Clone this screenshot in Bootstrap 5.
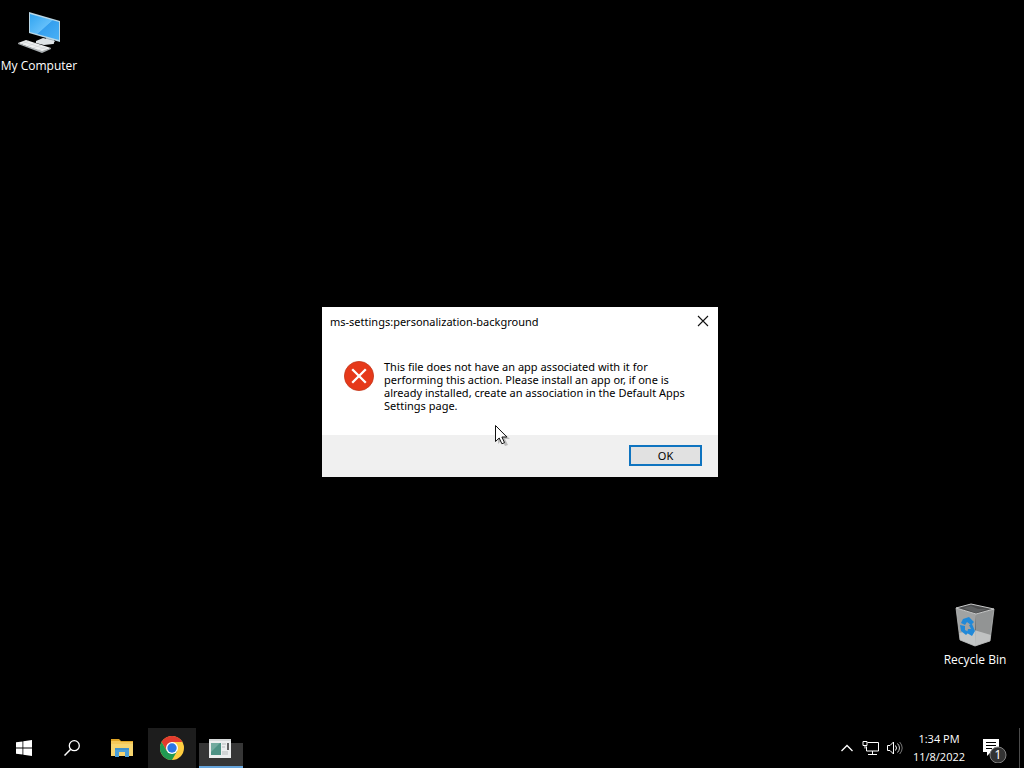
<!DOCTYPE html>
<html lang="en">
<head>
<meta charset="utf-8">
<meta name="viewport" content="width=device-width, initial-scale=1">
<title>Desktop</title>
<link href="https://cdn.jsdelivr.net/npm/bootstrap@5.3.0/dist/css/bootstrap.min.css" rel="stylesheet">
<style>
  body { background: #000; font-family: "Open Sans", "Noto Sans", sans-serif; font-size: 12px; line-height: 16px; }
  svg { display: block; flex: none; }
  .desktop-item { position: absolute; width: 78px; color: #fff; font-size: 12px; }
  .item-computer { left: 0; top: 8px; }
  .item-bin { right: 10px; bottom: 60px; }
  .msg-window { position: absolute; left: 322px; top: 307px; width: 396px; background: #fff; color: #000; font-family: "Noto Sans", sans-serif; font-size: 11px; }
  .msg-title { height: 30px; line-height: 30px; }
  .msg-close { width: 30px; height: 28px; }
  .msg-content { height: 98px; padding: 23px 22px 0; }
  .msg-content svg { margin: 1px 10px 0 0; }
  .msg-text { line-height: 13px; }
  .msg-footer { height: 42px; padding-top: 10px; background: #f0f0f0; }
  .btn-ok { width: 73px; height: 21px; border: 2px solid #0f74c0; background: #e1e1e1; font-size: 11px; line-height: 17px; color: #000; }
  .pointer { position: absolute; left: 494px; top: 424px; }
  .taskbar { height: 40px; color: #fff; }
  .task-btn { width: 48px; height: 40px; }
  .task-files { width: 52px; }
  .task-chrome { background: #1d1d1d; }
  .task-app { width: 44px; height: 40px; margin-left: 3px; padding-right: 2px !important; background: linear-gradient(transparent 15px, #363636 15px, #363636 38px, #66a5dc 38px); }
  .clock { width: 70px; font-size: 11px; line-height: 18px; }
  .show-desktop { width: 5px; height: 40px; margin-left: 11px; border-left: 1px solid #4c4c4c; }
</style>
</head>
<body class="vh-100 d-flex flex-column overflow-hidden">
<main class="flex-grow-1 position-relative">
  <a href="#" class="desktop-item item-computer d-flex flex-column align-items-center text-decoration-none text-nowrap">
    <svg width="48" height="50" viewBox="0 0 48 50" aria-hidden="true">
      <defs><linearGradient id="scr" x1="0" y1="0" x2="1" y2="1"><stop offset="0" stop-color="#30a4f0"/><stop offset=".5" stop-color="#63bffa"/><stop offset=".52" stop-color="#359fee"/><stop offset="1" stop-color="#49b1f6"/></linearGradient></defs>
      <path d="M31 29l8 2v5h-8z" fill="#9aa4aa"/>
      <path d="M21 33l7-3 12 3-2 3-9 1-8-2z" fill="#dfe4e7"/>
      <path d="M14 4l31 9v21L14 25z" fill="#b9d7e6"/>
      <path d="M15 6l29 8v18L15 24z" fill="url(#scr)"/>
      <path d="M3 35l8-3 25 8-9 4z" fill="#eef0f1"/>
      <path d="M3 35l24 8 9-3v1l-9 4-24-9z" fill="#a9afb2"/>
      <path d="M8 33.500l24 8M6 36l8-3M13 38l8-3M18 40l8-3M23 42l8-3" stroke="#c6cacc" stroke-width=".5" fill="none"/>
    </svg>
    <span>My Computer</span>
  </a>
  <a href="#" class="desktop-item item-bin d-flex flex-column align-items-center text-decoration-none text-nowrap">
    <svg width="48" height="50" viewBox="0 0 48 50" aria-hidden="true">
      <path d="M5 6l20 6-1 32-15-6z" fill="#a1a3a3"/>
      <path d="M25 12l18-5-4 32-15 5z" fill="#929494"/>
      <path d="M8 31l15-3 17 5-1 6-15 5-15-6z" fill="#cfd1d1" opacity=".75"/>
      <path d="M5 6l15-4 23 5-18 5z" fill="#4a4b4c" stroke="#c9caca" stroke-width="1"/>
      <path d="M12 6l8-2 7 3 9 0-11 4z" fill="#5d5f60"/>
      <path d="M5 6l4 32 15 6 15-5 4-32" fill="none" stroke="#b8baba" stroke-width=".8"/>
      <path d="M12 17l6-2 5 5-3 3-4-3-2 3-4-2zM9 23l5 1 0 4 4 2-3 3-5-4zM21 22l3 7-3 5-5-3 1-4h3l-2-4z" fill="#2189d8"/>
    </svg>
    <span>Recycle Bin</span>
  </a>

  <section class="msg-window" role="dialog" aria-labelledby="msgTitle">
    <header class="msg-title d-flex justify-content-between ps-2">
      <span id="msgTitle">ms-settings:personalization-background</span>
      <button type="button" class="msg-close btn p-0 border-0 rounded-0 d-flex align-items-center justify-content-center" aria-label="Close">
        <svg width="12" height="12" viewBox="0 0 12 12"><path d="M1 1l10 10M11 1L1 11" stroke="#111" stroke-width="1.1"/></svg>
      </button>
    </header>
    <div class="msg-content d-flex align-items-start">
      <svg width="30" height="30" viewBox="0 0 30 30" aria-hidden="true">
        <circle cx="15" cy="15" r="14.600" fill="#e6391a" stroke="#c3371b" stroke-width=".8"/>
        <path d="M8.200 8.200l13.600 13.600M21.800 8.200L8.200 21.800" stroke="#fff" stroke-width="2.300"/>
      </svg>
      <p class="msg-text mb-0 text-nowrap">This file does not have an app associated with it for<br>performing this action. Please install an app or, if one is<br>already installed, create an association in the Default Apps<br>Settings page.</p>
    </div>
    <footer class="msg-footer d-flex align-items-start justify-content-end pe-3">
      <button type="button" class="btn btn-ok p-0 rounded-0">OK</button>
    </footer>
  </section>

  <svg class="pointer" width="18" height="24" viewBox="0 0 18 24" aria-hidden="true">
    <path d="M4 4v16l4-4 3 6 3-1-3-6h5z" fill="#000" opacity=".22"/>
    <path d="M1.500 1.500v16l3.700-3.500 2.700 5.800 2.600-1.200-2.600-5.600h5z" fill="#fff" stroke="#111" stroke-width="1"/>
  </svg>
</main>

<nav class="taskbar d-flex align-items-stretch" aria-label="Taskbar">
  <button type="button" class="task-btn btn p-0 border-0 rounded-0 d-flex align-items-center justify-content-center" aria-label="Start">
    <svg width="16" height="16" viewBox="0 0 16 16"><path d="M0 2.300l6.500-.9v6.200H0zM7.300 1.300L16 0v7.600H7.300zM0 8.400h6.500v6.200L0 13.700zM7.300 8.400H16V16l-8.700-1.300z" fill="#fff"/></svg>
  </button>
  <button type="button" class="task-btn btn p-0 border-0 rounded-0 d-flex align-items-center justify-content-center" aria-label="Search">
    <svg width="16" height="16" viewBox="0 0 16 16"><circle cx="10.300" cy="5.700" r="5" fill="none" stroke="#fff" stroke-width="1.300"/><path d="M6.700 9.300L.5 15.500" stroke="#fff" stroke-width="1.500"/></svg>
  </button>
  <button type="button" class="task-btn task-files btn p-0 border-0 rounded-0 d-flex align-items-center justify-content-center" aria-label="File Explorer">
    <svg width="22" height="18" viewBox="0 0 22 18"><path d="M0 0h8l2 2h12v15H0z" fill="#e0a526"/><path d="M0 4h22v13H0z" fill="#f7d56f"/><path d="M0 2h9l1 1h12v2H0z" fill="#f5c95a"/><path d="M4 9h14v9h-4v-5H8v5H4z" fill="#4a9fd8"/><path d="M4 9h14v2H4z" fill="#3f90cb"/></svg>
  </button>
  <button type="button" class="task-btn task-chrome btn p-0 border-0 rounded-0 d-flex align-items-center justify-content-center" aria-label="Google Chrome">
    <svg width="24" height="24" viewBox="0 0 24 24">
      <circle cx="12" cy="12" r="12" fill="#ffcd40"/>
      <path d="M1.600 6A12 12 0 0 1 22.400 6H12L6.800 15z" fill="#e33b2e"/>
      <path d="M1.600 6A12 12 0 0 0 12 24l5.200-9H6.800z" fill="#219a52"/>
      <circle cx="12" cy="12" r="6" fill="#fff"/><circle cx="12" cy="12" r="4.700" fill="#2b76e5"/>
    </svg>
  </button>
  <button type="button" class="task-app btn p-0 border-0 rounded-0 d-flex align-items-center justify-content-center" aria-label="Running application">
    <svg width="22" height="19" viewBox="0 0 22 19"><path d="M0 0h22v19H0z" fill="#eceeee"/><path d="M0 0h22v2H0z" fill="#d5d9d9"/><path d="M2 4h10v12H2z" fill="#4d9284"/><path d="M2 4h9L2 13z" fill="#71aa9e"/><path d="M13 5h4M13 8h3M13 13h6M13 15h6" stroke="#b5babb"/><path d="M19 4v7" stroke="#333" stroke-width="1.500"/></svg>
  </button>

  <div class="ms-auto d-flex align-items-center">
    <button type="button" class="btn p-0 border-0 me-2" aria-label="Show hidden icons"><svg width="14" height="10" viewBox="0 0 14 10"><path d="M1.500 8L7 2.500 12.500 8" fill="none" stroke="#fff" stroke-width="1.300"/></svg></button>
    <button type="button" class="btn p-0 border-0 me-2" aria-label="Network"><svg width="17" height="16" viewBox="0 0 17 16"><path d="M5.500 2.500h11v8.500h-12V6.500M10.500 11v3.500M6 14.500h9M1 1.500h4v4H1zM3 5.500v3" fill="none" stroke="#fff"/></svg></button>
    <button type="button" class="btn p-0 border-0" aria-label="Volume"><svg width="17" height="16" viewBox="0 0 17 16"><path d="M.5 5.500h2.500l3.500-3.500v12L3 10.500H.5z" fill="none" stroke="#fff"/><path d="M8.500 5.500q2 2.500 0 5" fill="none" stroke="#fff"/><path d="M10.500 3.500q4 4.500 0 9" fill="none" stroke="#ccc"/><path d="M12.700 2q5 6 0 12" fill="none" stroke="#777"/></svg></button>
    <time class="clock text-center" datetime="2022-11-08T13:34">1:34 PM<br>11/8/2022</time>
    <button type="button" class="btn p-0 border-0 ms-2 mt-1" aria-label="1 notification">
      <svg width="26" height="26" viewBox="0 0 26 26"><path d="M1 2h16v13H9l-4 4v-4H1z" fill="#fff"/><path d="M4 5.500h10M4 8.500h10M4 11.500h6" stroke="#000"/><circle cx="16" cy="18" r="8" fill="#333" stroke="#808080"/><text x="16" y="22" text-anchor="middle" font-family="Noto Sans, sans-serif" font-size="12" fill="#fff">1</text></svg>
    </button>
    <div class="show-desktop"></div>
  </div>
</nav>
<script src="https://cdn.jsdelivr.net/npm/bootstrap@5.3.0/dist/js/bootstrap.bundle.min.js"></script>
</body>
</html>
